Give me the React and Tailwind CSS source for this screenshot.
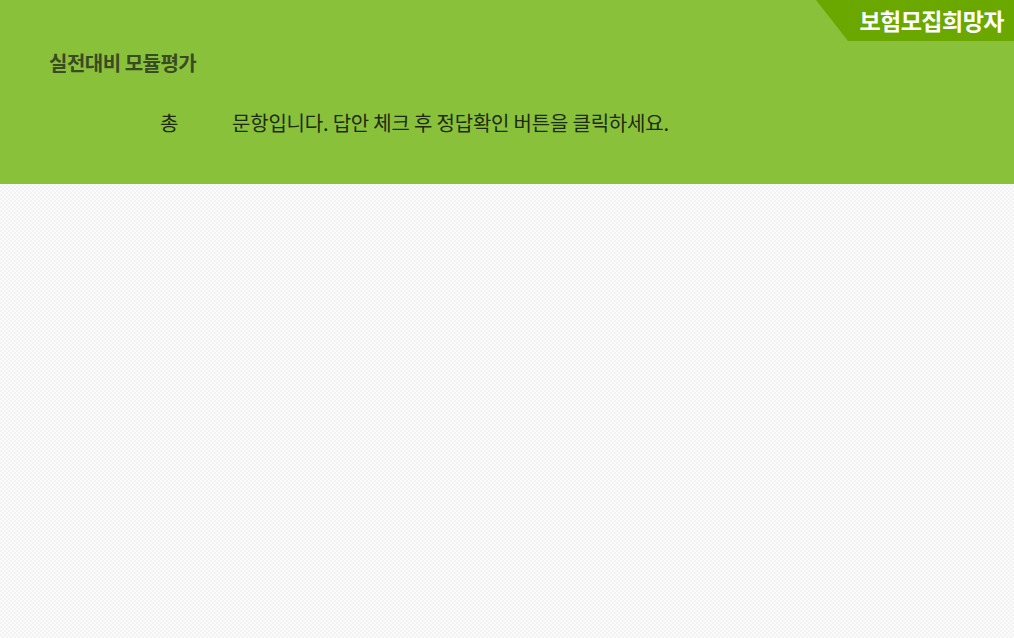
import React from 'react';

const font = { fontFamily: '"Noto Sans CJK KR", "Noto Sans", sans-serif' };

export default function App() {
  return (
    <div className="w-[1014px] h-[638px] overflow-hidden bg-[#f8f8f8] bg-[repeating-conic-gradient(#f3f3f3_0_25%,#fbfbfb_0_50%)] bg-[length:4px_4px]" style={font}>
      <div className="relative h-[184px] bg-[#89c13b]">
        <div className="absolute top-0 right-0 w-[198px] h-[41px] bg-[#6aa800] [clip-path:polygon(0_0,100%_0,100%_100%,32px_100%)] flex items-center justify-end pr-[10px]">
          <span className="text-white text-[23px] font-bold tracking-[-0.5px] leading-none">보험모집희망자</span>
        </div>
        <div className="pl-[49px] pt-[48px]">
          <h1 className="text-[20px] font-semibold text-[#3a4a22] leading-[30px] tracking-[-0.5px]">실전대비 모듈평가</h1>
          <p className="mt-[30px] pl-[111px] flex text-[20px] text-[#1e2a10] leading-[30px] tracking-[-0.2px]">
            <span className="w-[72px]">총</span>
            <span>문항입니다. 답안 체크 후 정답확인 버튼을 클릭하세요.</span>
          </p>
        </div>
      </div>
    </div>
  );
}
